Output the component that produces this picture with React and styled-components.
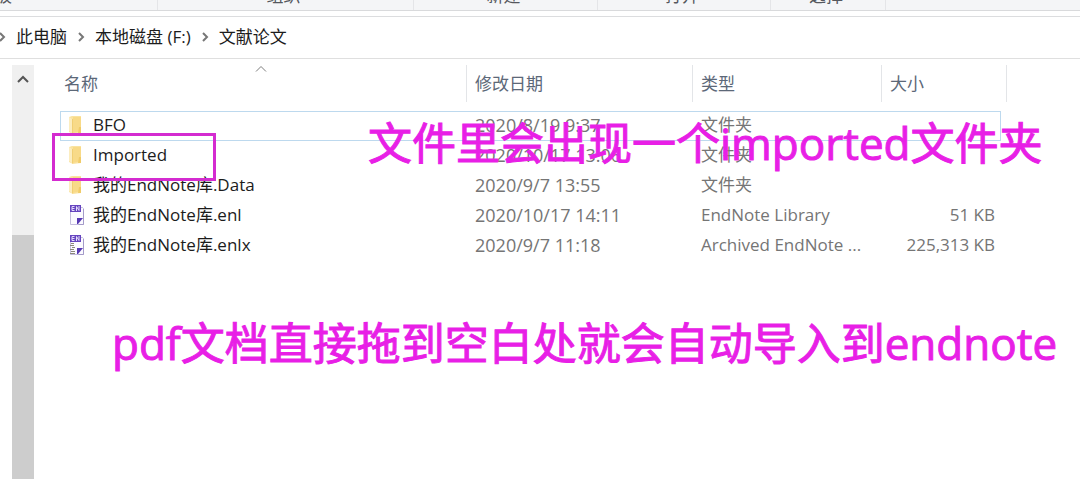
import React from 'react'
import styled, { createGlobalStyle } from 'styled-components'

const GlobalStyle = createGlobalStyle`
  * {
    box-sizing: border-box;
  }

  body {
    margin: 0;
    background: #fff;
    color: #1c1c1c;
    font-family: 'Open Sans', 'Noto Sans CJK SC', sans-serif;
    font-size: 17px;
    line-height: 24px;
  }

  button {
    margin: 0;
    padding: 0;
    border: 0;
    background: none;
    color: inherit;
    font: inherit;
  }
`

const Window = styled.div`
  height: 100vh;
  display: flex;
  flex-direction: column;
  overflow: hidden;
`

const Ribbon = styled.div`
  flex: none;
  height: 11px;
  display: flex;
  overflow: hidden;
  background: #f4f5f7;
  border-bottom: 1px solid #d9dadc;
`

const RibbonGroup = styled.div`
  flex: none;
  width: ${(props) => props.$width}px;
  display: flex;
  align-items: flex-end;
  justify-content: ${(props) => (props.$start ? 'flex-start' : 'center')};
  padding: 0 4px 2px 0;
  border-right: 1px solid #e4e5e8;
  color: #55585e;
`

// only the last character of the first label is inside the window
const RibbonLabel = styled.span`
  margin-left: ${(props) => (props.$start ? '-39px' : '0')};
  white-space: nowrap;
`

const AddressBar = styled.nav`
  flex: none;
  height: 43px;
  margin-top: 5px;
  padding-bottom: 2px;
  display: flex;
  align-items: center;
  gap: 10px;
  overflow: hidden;
  border-top: 1px solid #dcdddf;
  border-bottom: 1px solid #dfdfdf;
  white-space: nowrap;
`

const Chevron = styled.svg`
  flex: none;
  width: 8px;
  height: 10px;
  fill: none;
  stroke: #777;
  stroke-width: 2;

  &:first-child {
    margin-left: -2px;
  }
`

const Content = styled.div`
  flex: 1;
  min-height: 0;
  display: flex;
  padding: 6px 0 0 12px;
`

const Scrollbar = styled.div`
  flex: none;
  width: 22px;
  display: flex;
  flex-direction: column;
  background: #f0f0f0;
`

const ScrollButton = styled.button`
  height: 28px;
  display: flex;
  align-items: center;
  justify-content: center;
`

const ScrollThumb = styled.div`
  flex: 1;
  margin-top: 142px;
  background: #cdcdcd;
`

const FilePane = styled.main`
  position: relative;
  flex: 1;
  min-width: 0;
  padding-left: 26px;
`

const FileTable = styled.table`
  width: 941px;
  table-layout: fixed;
  border-collapse: separate;
  border-spacing: 0;
`

const Column = styled.col`
  width: ${(props) => props.$width}px;
`

const HeadCell = styled.th`
  position: relative;
  height: 46px;
  padding: ${(props) => (props.$first ? '0 0 8px 4px' : '0 0 8px 14px')};
  color: #5c6878;
  font-weight: 400;
  text-align: left;

  &::after {
    content: '';
    position: absolute;
    top: 0;
    right: -6px;
    width: 1px;
    height: 37px;
    background: #e3e5e8;
  }
`

const SortMark = styled.svg`
  position: absolute;
  top: 1px;
  left: calc(50% - 6px);
  width: 12px;
  height: 6px;
  fill: none;
  stroke: #7d7d7d;
`

const Row = styled.tr`
  outline: ${(props) => (props.$focused ? '1px solid #bdd9ee' : 'none')};
  outline-offset: -1px;
`

const Cell = styled.td`
  height: 30px;
  padding: 0 6px 2px 14px;
  color: #757575;
  font-size: ${(props) => (props.$date ? '18px' : '17px')};
  text-align: ${(props) => (props.$right ? 'right' : 'left')};
  white-space: nowrap;
`

const NameCell = styled(Cell)`
  padding: 0 0 2px 8px;
  color: #1c1c1c;
`

const FileName = styled.div`
  display: flex;
  align-items: center;
  gap: 8px;
`

const Icon = styled.svg`
  flex: none;
  width: 17px;
  height: 22px;
`

const Marker = styled.div`
  position: absolute;
  top: 68px;
  left: 18px;
  width: 164px;
  height: 48px;
  border: 3px solid #d42bd0;
`

const Note = styled.p`
  position: absolute;
  top: ${(props) => props.$top}px;
  left: ${(props) => props.$left}px;
  margin: 0;
  color: #e81fe6;
  font-size: 44px;
  line-height: 60px;
  white-space: nowrap;
  -webkit-text-stroke: 1px #e81fe6;
`

const groups = [
  { label: '剪贴板', width: 158, start: true },
  { label: '组织', width: 256 },
  { label: '新建', width: 184 },
  { label: '打开', width: 173 },
  { label: '选择', width: 115 },
]

const path = ['此电脑', '本地磁盘 (F:)', '文献论文']

const columns = [
  { label: '名称', width: 401 },
  { label: '修改日期', width: 226 },
  { label: '类型', width: 189 },
  { label: '大小', width: 125 },
]

const files = [
  { name: 'BFO', date: '2020/8/19 9:37', type: '文件夹', icon: 'folder', focused: true },
  { name: 'Imported', date: '2020/10/17 13:06', type: '文件夹', icon: 'folder' },
  { name: '我的EndNote库.Data', date: '2020/9/7 13:55', type: '文件夹', icon: 'folder' },
  { name: '我的EndNote库.enl', date: '2020/10/17 14:11', type: 'EndNote Library', size: '51 KB', icon: 'library' },
  { name: '我的EndNote库.enlx', date: '2020/9/7 11:18', type: 'Archived EndNote ...', size: '225,313 KB', icon: 'archive' },
]

const FolderIcon = () => (
  <Icon viewBox="0 0 17 22" aria-hidden="true">
    <path d="M1 3l3-1h9v17l-8 1-4-2z" fill="#fae3a0" />
    <path d="M5 3h8v14l-8 2z" fill="#f8da88" />
    <path d="M1 3l3 2v14l-3-2z" fill="#fcedc0" />
    <path d="M4 5h1v15l-1-1z" fill="#f1cf74" />
    <path d="M11 13h2v6h-3z" fill="#f0cb68" />
  </Icon>
)

const DocumentIcon = ({ archive }) => (
  <Icon viewBox="0 0 17 22" aria-hidden="true">
    <path d="M2.5 3.5h12l1 1v16h-13z" fill="#fbfaff" stroke="#c3bcdd" />
    <path d="M15.500 5v15.500h-5" fill="none" stroke="#a49bc9" />
    <path d="M2 1h11v7H2z" fill="#6544bf" />
    <path d="M6.500 2.500h-2.500v4h2.500M4 4.500h2.500M8.500 7V2.500l2.500 4V2" fill="none" stroke="#e3dafa" />
    <path d="M9 14h6l-5 6H9z" fill="#5638b4" />
    {archive && <path d="M3 9.500h3M2 11.500h4M4 13.500h3M2 15.500h4M3 17.500h4M2 19.500h5" stroke="#8b887a" />}
  </Icon>
)

const FileIcon = ({ kind }) => {
  if (kind === 'folder') {
    return <FolderIcon />
  }
  return <DocumentIcon archive={kind === 'archive'} />
}

const PathChevron = () => (
  <Chevron viewBox="0 0 8 10" aria-hidden="true">
    <path d="M2 1l4 4-4 4" />
  </Chevron>
)

const App = () => {
  return (
    <Window>
      <GlobalStyle />
      <Ribbon>
        {groups.map((group) => (
          <RibbonGroup key={group.label} $width={group.width} $start={group.start}>
            <RibbonLabel $start={group.start}>{group.label}</RibbonLabel>
          </RibbonGroup>
        ))}
      </Ribbon>
      <AddressBar>
        {path.map((part) => (
          <React.Fragment key={part}>
            <PathChevron />
            <button type="button">{part}</button>
          </React.Fragment>
        ))}
      </AddressBar>
      <Content>
        <Scrollbar>
          <ScrollButton type="button" aria-label="向上滚动">
            <svg width="12" height="8" viewBox="0 0 12 8" fill="none" stroke="#555" strokeWidth="2">
              <path d="M1 7l5-5 5 5" />
            </svg>
          </ScrollButton>
          <ScrollThumb />
        </Scrollbar>
        <FilePane>
          <FileTable>
            <colgroup>
              {columns.map((column) => (
                <Column key={column.label} $width={column.width} />
              ))}
            </colgroup>
            <thead>
              <tr>
                {columns.map((column, index) => (
                  <HeadCell key={column.label} $first={index === 0}>
                    <button type="button">{column.label}</button>
                    {index === 0 && (
                      <SortMark viewBox="0 0 12 6" aria-hidden="true">
                        <path d="M1 5.500l5-5 5 5" />
                      </SortMark>
                    )}
                  </HeadCell>
                ))}
              </tr>
            </thead>
            <tbody>
              {files.map((file) => (
                <Row key={file.name} $focused={file.focused}>
                  <NameCell>
                    <FileName>
                      <FileIcon kind={file.icon} />
                      <span>{file.name}</span>
                    </FileName>
                  </NameCell>
                  <Cell $date>{file.date}</Cell>
                  <Cell>{file.type}</Cell>
                  <Cell $right>{file.size}</Cell>
                </Row>
              ))}
            </tbody>
          </FileTable>
          <Marker />
          <Note $top={48} $left={334}>
            文件里会出现一个imported文件夹
          </Note>
          <Note $top={248} $left={78}>
            pdf文档直接拖到空白处就会自动导入到endnote
          </Note>
        </FilePane>
      </Content>
    </Window>
  )
}

export default App
